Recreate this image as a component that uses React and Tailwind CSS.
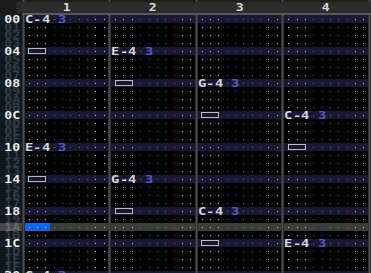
import React from "react";

const CHANNELS = [1, 2, 3, 4];
const ROWS = 33;

// cell kinds in each channel: note x3, instrument x2, volume x2, effect x1, param x2
const DOT_COLORS = [
  "bg-[#c8c8c8]",
  "bg-[#c8c8c8]",
  "bg-[#c8c8c8]",
  "bg-[#5252d6]",
  "bg-[#5252d6]",
  "bg-[#2fa52f]",
  "bg-[#2fa52f]",
  "bg-[#e03434]",
  "bg-[#c8c8c8]",
  "bg-[#c8c8c8]",
];

const pattern = {
  0: { 0: "C-4" },
  4: { 0: "box", 1: "E-4" },
  8: { 1: "box", 2: "G-4" },
  12: { 2: "box", 3: "C-4" },
  16: { 0: "E-4", 3: "box" },
  20: { 0: "box", 1: "G-4" },
  24: { 1: "box", 2: "C-4" },
  28: { 2: "box", 3: "E-4" },
  32: { 0: "G-4" },
};

const hex = (n) => n.toString(16).toUpperCase().padStart(2, "0");

const Dot = ({ color }) => (
  <div className="flex items-center justify-center h-[8px]">
    <div className={`w-[1px] h-[1px] ${color}`} />
  </div>
);

const Char = ({ ch, color }) => (
  <div
    className={`flex items-center justify-center h-[8px] text-[11px] font-bold leading-none scale-x-[1.25] ${color}`}
  >
    {ch}
  </div>
);

const Channel = ({ value, cursor }) => {
  const cells = [];
  for (let i = 0; i < 10; i++) {
    if (value && value !== "box" && i < 3) {
      cells.push(<Char key={i} ch={value[i]} color="text-[#d6d6d6]" />);
    } else if (value && value !== "box" && i === 4) {
      cells.push(<Char key={i} ch="3" color="text-[#5a5ad8]" />);
    } else if (value === "box" && i < 3) {
      if (i === 0)
        cells.push(
          <div key={i} className="col-span-3 flex items-center justify-center h-[8px]">
            <div className="w-[18px] h-[6px] border border-[#bdbdbd]" />
          </div>
        );
    } else {
      cells.push(
        <div key={i} className={cursor && i < 3 ? "bg-[#0a66f2]" : ""}>
          <Dot color={DOT_COLORS[i]} />
        </div>
      );
    }
  }
  return <div className="grid grid-cols-10 w-[84px] h-[8px]">{cells}</div>;
};

const Sep = () => <div className="w-[3px] self-stretch bg-[#4c4c4c] border-x border-[#333]" />;

export default function App() {
  return (
    <div
      className="w-[371px] h-[273px] overflow-hidden bg-black"
      style={{ fontFamily: '"DejaVu Sans Mono", monospace' }}
    >
      {/* header */}
      <div className="flex h-[13px]">
        <div className="w-[22px] bg-[#1b1b1b]" />
        <Sep />
        {CHANNELS.map((c) => (
          <React.Fragment key={c}>
            <div className="w-[84px] flex flex-col">
              <div className="h-[3px] bg-[#1e1e1e]" />
              <div className="flex-1 bg-[#2c2c2c] flex items-center justify-center text-[11px] font-bold leading-none text-[#d8d8d8] scale-x-[1.2]">
                {c}
              </div>
            </div>
            <Sep />
          </React.Fragment>
        ))}
      </div>
      <div className="flex h-[2px]">
        <div className="w-[22px] bg-[#1b1b1b]" />
        <div className="flex-1 bg-[#595959]" />
      </div>

      {/* rows */}
      {Array.from({ length: ROWS }, (_, r) => {
        const hl = r % 4 === 0;
        const cursor = r === 26;
        const rowBg = cursor ? "bg-[#3b3d3b]" : hl ? "bg-[#181834]" : "bg-black";
        const data = pattern[r] || {};
        return (
          <div key={r} className={`flex h-[8px] ${rowBg}`}>
            <div
              className={`w-[22px] flex items-center justify-end pr-[2px] ${
                cursor
                  ? "bg-[#474747] text-[#6a6a6a]"
                  : hl
                  ? "bg-[#141c28] text-[#eaeaea]"
                  : "bg-[#10171e] text-[#323c46]"
              }`}
            >
              <span className="text-[11px] font-bold leading-none scale-x-[1.2] origin-right">
                {hex(r)}
              </span>
            </div>
            <Sep />
            {CHANNELS.map((c, i) => (
              <React.Fragment key={c}>
                <Channel value={data[i]} cursor={cursor && i === 0} />
                <Sep />
              </React.Fragment>
            ))}
          </div>
        );
      })}
    </div>
  );
}
